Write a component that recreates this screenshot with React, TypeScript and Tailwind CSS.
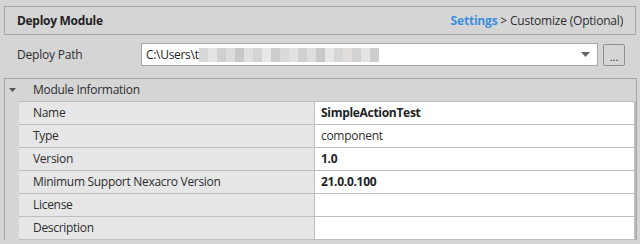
const rows = [
  { label: "Name", value: "SimpleActionTest", bold: true },
  { label: "Type", value: "component", bold: false },
  { label: "Version", value: "1.0", bold: true },
  { label: "Minimum Support Nexacro Version", value: "21.0.0.100", bold: true },
  { label: "License", value: "", bold: false },
  { label: "Description", value: "", bold: false },
]

// blurred part of the path
const blur = [
  "#d8d8d8", "#e4e4e4", "#cfcfcf", "#dcdcdc", "#c8c8c8", "#e0e0e0", "#d4d4d4", "#e8e8e8",
  "#cccccc", "#dadada", "#e2e2e2", "#d0d0d0", "#dedede", "#c9c9c9", "#e6e6e6", "#d6d6d6",
  "#e0dcdc", "#d2d2d2", "#e4e4e4", "#cdcdcd",
]

export default function App() {
  return (
    <div
      className="w-[640px] h-[244px] bg-[#d5d5d5] text-[12px] text-[#2e2e2e] overflow-hidden pt-[6px] px-[4px]"
      style={{ fontFamily: '"Open Sans", "Noto Sans", sans-serif' }}
    >
      <div className="h-[29px] border border-[#a6a6a6] flex items-center justify-between pl-[12px] pr-[12px]">
        <span className="font-bold text-[#222] tracking-[-0.3px]">Deploy Module</span>
        <span className="tracking-[-0.2px]">
          <span className="font-bold text-[#3b8fe0]">Settings</span>
          <span> &gt; Customize (Optional)</span>
        </span>
      </div>

      <div className="flex items-center mt-[8px] h-[23px]">
        <span className="w-[137px] pl-[13px] tracking-[-0.2px]">Deploy Path</span>
        <div className="w-[457px] h-[23px] bg-white border border-[#a6a6a6] flex items-center pl-[4px] pr-[6px]">
          <span className="tracking-[-0.3px] text-[#222]">C:\Users\t</span>
          <div className="flex h-[14px] mt-[1px]">
            {blur.map((c, i) => (
              <div key={i} className="w-[9px] h-full" style={{ backgroundColor: c }} />
            ))}
          </div>
          <div className="flex-1" />
          <svg width="9" height="5" viewBox="0 0 9 5" className="mr-[1px]">
            <path d="M0 0 L9 0 L4.5 5 Z" fill="#666" />
          </svg>
        </div>
        <div className="ml-[5px] w-[22px] h-[22px] border border-[#8f8f8f] rounded-[2px] flex items-center justify-center text-[11px] leading-none pt-[3px]">
          ...
        </div>
      </div>

      <div className="mt-[12px] border border-[#a6a6a6] border-b-0 w-[633px]">
        <div className="h-[22px] flex items-center bg-[#d5d5d5]">
          <div className="w-[14px] flex justify-center">
            <svg width="7" height="4" viewBox="0 0 7 4">
              <path d="M0 0 L7 0 L3.5 4 Z" fill="#555" />
            </svg>
          </div>
          <span className="pl-[14px] tracking-[-0.3px]">Module Information</span>
        </div>
        {rows.map((r) => (
          <div key={r.label} className="flex h-[23px]">
            <div className="w-[14px] bg-[#d5d5d5]" />
            <div className="flex-1 flex border-t border-[#bdbdbd]">
              <div className="w-[296px] bg-[#e6e6e6] border-r border-[#bdbdbd] flex items-center pl-[14px] tracking-[-0.3px]">
                {r.label}
              </div>
              <div className={`flex-1 bg-white flex items-center pl-[6px] tracking-[-0.3px] ${r.bold ? "font-bold text-[#222]" : ""}`}>
                {r.value}
              </div>
              <div className="w-[2px] bg-[#bdbdbd]" />
            </div>
          </div>
        ))}
        <div className="h-px bg-[#bdbdbd] ml-[14px]" />
      </div>
    </div>
  )
}
